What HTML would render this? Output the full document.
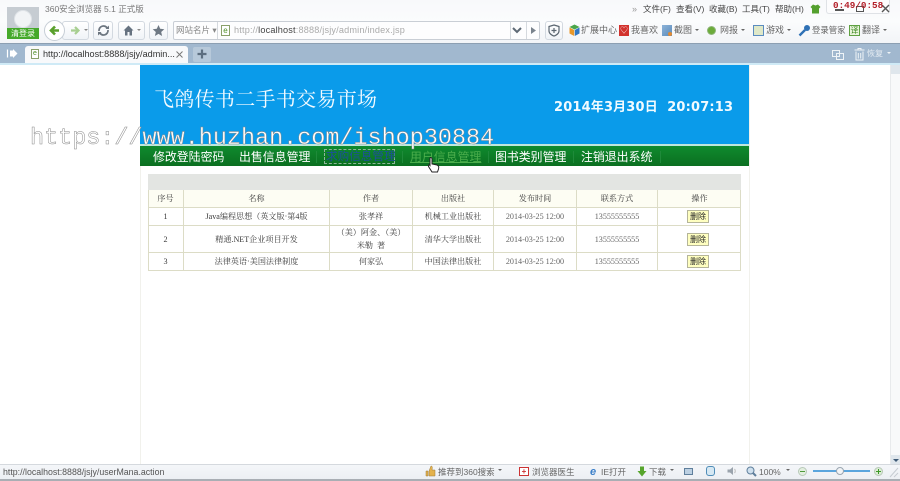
<!DOCTYPE html>
<html><head><meta charset="utf-8">
<style>
html,body{margin:0;padding:0;width:900px;height:481px;overflow:hidden;background:#fff}
body{position:relative;font-family:"Liberation Sans","Noto Sans CJK SC",sans-serif;font-size:9px;color:#666;filter:blur(.3px)}
.a{position:absolute;white-space:nowrap}
.btn{position:absolute;background:linear-gradient(#fff,#f0f3f7);border:1px solid #d3d9e0;border-radius:3px;box-sizing:border-box}
.sv{position:absolute;overflow:visible}
.nav{position:absolute;top:149px;font-size:11.9px;color:#fff;line-height:16px;white-space:nowrap}
.c{position:absolute;text-align:center;font-family:"Liberation Serif","Noto Serif CJK SC",serif;font-size:8.1px;color:#3a3a3a;display:flex;align-items:center;justify-content:center;line-height:13px}
.del{position:absolute;left:687px;width:22px;height:13px;background:#ffffc0;border:1px solid #b5b59a;box-sizing:border-box;font-size:8px;color:#222;text-align:center;line-height:11px}
.st{position:absolute;top:466px;font-size:8.5px;color:#666;white-space:nowrap;line-height:12px}
</style></head><body>

<!-- browser chrome -->
<div class="a" style="left:0;top:0;width:900px;height:43px;background:linear-gradient(#f8f9fb,#fbfcfd 50%,#f2f4f7)"></div>
<div class="a" style="left:0;top:43px;width:900px;height:1px;background:#8c9fb2"></div>
<div class="a" style="left:0;top:44px;width:900px;height:19px;background:#a1b8cf"></div>
<div class="a" style="left:0;top:63px;width:900px;height:2px;background:#cfeaf6"></div>

<!-- avatar -->
<div class="a" style="left:7px;top:7px;width:32px;height:21px;background:#c6ccd2"></div>
<div class="a" style="left:14px;top:10px;width:18px;height:18px;border-radius:50%;background:#f2f4f6;border:1px solid #dfe3e7;box-sizing:border-box"></div>
<div class="a" style="left:7px;top:28px;width:32px;height:11px;background:#45a92a;color:#fff;font-size:8px;line-height:11px;text-align:center">清登录</div>
<div class="a" style="left:45px;top:4px;font-size:8.5px;line-height:11px;color:#777">360安全浏览器 5.1 正式版</div>

<!-- nav buttons -->
<div class="btn" style="left:62px;top:21px;width:27px;height:19px"></div>
<div class="a" style="left:44px;top:20px;width:21px;height:21px;border-radius:50%;background:#fff;border:1px solid #c7ced6;box-sizing:border-box"></div>
<svg class="sv" style="left:48px;top:24px" width="13" height="13"><path d="M11 6.500H4M7 2.500L3 6.500L7 10.500" fill="none" stroke="#5aa02c" stroke-width="2.600"/></svg>
<svg class="sv" style="left:70px;top:25px" width="11" height="11"><path d="M1 5.500H8M5 2L8.500 5.500L5 9" fill="none" stroke="#a8cf91" stroke-width="2.200"/></svg>
<div class="a" style="left:84px;top:29px;border:2px solid transparent;border-top:2px solid #888"></div>
<div class="btn" style="left:93px;top:21px;width:20px;height:19px"></div>
<svg class="sv" style="left:97px;top:24px" width="13" height="13"><path d="M2 7A4.500 4.500 0 0 1 10.500 4.500M11 6A4.500 4.500 0 0 1 2.500 8.500" fill="none" stroke="#6d7680" stroke-width="1.800"/><path d="M8.500 5H12V1.500zM4.500 8H1V11.500z" fill="#6d7680"/></svg>
<div class="btn" style="left:118px;top:21px;width:27px;height:19px"></div>
<svg class="sv" style="left:123px;top:25px" width="11" height="11"><path d="M5.500 0.500L0.500 5.500H2V10.500H4.500V7H6.500V10.500H9V5.500H10.500z" fill="#667280"/></svg>
<div class="a" style="left:137px;top:29px;border:2px solid transparent;border-top:2px solid #888"></div>
<div class="btn" style="left:149px;top:21px;width:19px;height:19px"></div>
<svg class="sv" style="left:152px;top:24px" width="13" height="13"><path d="M6.500 1L8.200 4.800L12.300 5.200L9.200 8L10.100 12L6.500 9.900L2.900 12L3.800 8L0.700 5.200L4.800 4.800z" fill="#6e7883"/></svg>

<!-- address bar -->
<div class="btn" style="left:173px;top:21px;width:367px;height:19px;background:#fdfdfe;border-color:#c9ced5;border-radius:2px"></div>
<div class="a" style="left:176px;top:24px;font-size:8.5px;line-height:12px;color:#888">网站名片 ▾</div>
<div class="a" style="left:217px;top:22px;width:1px;height:17px;background:#d5d9de"></div>
<div class="a" style="left:221px;top:25px;width:9px;height:11px;background:#fff;border:1px solid #8aa06a;box-sizing:border-box;color:#4d8f25;font-size:8px;line-height:9px;text-align:center">e</div>
<div class="a" style="left:234px;top:24px;font-size:9.150px;line-height:13px;color:#aaa;letter-spacing:.02em">http://<b style="color:#444;font-weight:normal">localhost</b>:8888/jsjy/admin/index.jsp</div>
<div class="a" style="left:510px;top:22px;width:15px;height:17px;border-left:1px solid #d5d9de;border-right:1px solid #d5d9de"></div>
<svg class="sv" style="left:512px;top:27px" width="10" height="7"><path d="M1 1L5 5L9 1" fill="none" stroke="#5e6975" stroke-width="2"/></svg>
<svg class="sv" style="left:530px;top:26px" width="7" height="9"><path d="M1 1L6 4.500L1 8z" fill="#7a838d"/></svg>
<div class="btn" style="left:545px;top:21px;width:18px;height:19px"></div>
<svg class="sv" style="left:548px;top:24px" width="12" height="13"><path d="M6 1L11 2.500V7C11 9.500 8 11.500 6 12C4 11.500 1 9.500 1 7V2.500z" fill="none" stroke="#5b6670" stroke-width="1.200"/><path d="M6 4V9M3.500 6.500H8.500" stroke="#5b6670" stroke-width="1.200"/></svg>

<!-- toolbar right -->
<svg class="sv" style="left:569px;top:24px" width="11" height="13"><path d="M5.500 0.500L10.500 3L5.500 5.500L0.500 3z" fill="#4aa64a"/><path d="M0.500 3.500L5.200 6V12L0.500 9.500z" fill="#e9982a"/><path d="M10.500 3.500L5.800 6V12L10.500 9.500z" fill="#3078c5"/></svg>
<div class="a" style="left:581px;top:25px;line-height:11px">扩展中心</div>
<div class="a" style="left:619px;top:25px;width:10px;height:11px;background:#d2322d;color:#fff;font-size:8px;line-height:11px;text-align:center">♡</div>
<div class="a" style="left:631px;top:25px;line-height:11px">我喜欢</div>
<div class="a" style="left:662px;top:25px;width:10px;height:11px;background:linear-gradient(135deg,#8db3d9,#5b8cbb)"></div>
<div class="a" style="left:668px;top:32px;width:4px;height:4px;background:#e08a34;border-radius:50%"></div>
<div class="a" style="left:674px;top:25px;line-height:11px">截图</div>
<div class="a" style="left:695px;top:29px;border:2px solid transparent;border-top:2px solid #666"></div>
<div class="a" style="left:707px;top:26px;width:9px;height:9px;border-radius:50%;background:#6cab3a;border:1px solid #8fb67a;box-sizing:border-box"></div>
<div class="a" style="left:720px;top:25px;line-height:11px">网报</div>
<div class="a" style="left:741px;top:29px;border:2px solid transparent;border-top:2px solid #666"></div>
<div class="a" style="left:753px;top:25px;width:11px;height:11px;background:#dfe8c8;border:1px solid #5a8cc0;box-sizing:border-box"></div>
<div class="a" style="left:766px;top:25px;line-height:11px">游戏</div>
<div class="a" style="left:787px;top:29px;border:2px solid transparent;border-top:2px solid #666"></div>
<svg class="sv" style="left:798px;top:24px" width="13" height="13"><circle cx="9" cy="4" r="3" fill="#2f71b5"/><path d="M7 6L1.500 11.500" stroke="#2f71b5" stroke-width="2.400"/></svg>
<div class="a" style="left:812px;top:25px;line-height:11px;font-size:8.4px">登录管家</div>
<div class="a" style="left:849px;top:25px;width:11px;height:11px;background:#e9f4dc;border:1px solid #5fa142;box-sizing:border-box;color:#3d8a22;font-size:8px;line-height:9px;text-align:center">译</div>
<div class="a" style="left:862px;top:25px;line-height:11px">翻译</div>
<div class="a" style="left:883px;top:29px;border:2px solid transparent;border-top:2px solid #666"></div>

<!-- menu row -->
<div class="a" style="left:632px;top:4px;font-size:9px;color:#999;line-height:11px">»</div>
<div class="a" style="left:643px;top:4px;font-size:8.5px;line-height:11px;color:#444">文件(F)</div>
<div class="a" style="left:676px;top:4px;font-size:8.5px;line-height:11px;color:#444">查看(V)</div>
<div class="a" style="left:709px;top:4px;font-size:8.5px;line-height:11px;color:#444">收藏(B)</div>
<div class="a" style="left:742px;top:4px;font-size:8.5px;line-height:11px;color:#444">工具(T)</div>
<div class="a" style="left:775px;top:4px;font-size:8.5px;line-height:11px;color:#444">帮助(H)</div>
<svg class="sv" style="left:810px;top:4px" width="11" height="10"><path d="M3 0.500L5.500 1.500L8 0.500L10.500 3L9 4.500V9.500H2V4.500L0.500 3z" fill="#54a02e"/></svg>
<div class="a" style="left:826px;top:0;width:64px;height:14px;background:#fcfcfd;border:1px solid #dfe2e6;border-top:0;border-radius:0 0 3px 3px;box-sizing:border-box"></div>
<div class="a" style="left:835px;top:9px;width:9px;height:2px;background:#555"></div>
<div class="a" style="left:856px;top:6px;width:8px;height:6px;border:1px solid #555;box-sizing:border-box"></div>
<svg class="sv" style="left:881px;top:4px" width="9" height="9"><path d="M1 1L8 8M8 1L1 8" stroke="#555" stroke-width="1.400"/></svg>
<div class="a" style="left:833px;top:0;font-family:'Liberation Mono',monospace;font-weight:bold;font-size:9.300px;line-height:11px;color:#b3202a">0:49/0:58</div>

<!-- tab row -->
<svg class="sv" style="left:7px;top:49px" width="11" height="9"><path d="M0.500 0.500V8.500" stroke="#fff" stroke-width="1.200"/><path d="M3 1.500H6V0L10.500 4.500L6 9V7.500H3z" fill="#fff"/></svg>
<div class="a" style="left:25px;top:46px;width:163px;height:17px;background:#f8f9fb;border-radius:3px 3px 0 0"></div>
<div class="a" style="left:31px;top:49px;width:8px;height:10px;background:#fff;border:1px solid #8aa06a;box-sizing:border-box;color:#4d8f25;font-size:7px;line-height:8px;text-align:center">e</div>
<div class="a" style="left:43px;top:48px;font-size:9.100px;line-height:13px;color:#333">http://localhost:8888/jsjy/admin...</div>
<svg class="sv" style="left:176px;top:51px" width="7" height="7"><path d="M0.500 0.500L6.500 6.500M6.500 0.500L0.500 6.500" stroke="#777" stroke-width="1"/></svg>
<div class="a" style="left:193px;top:47px;width:18px;height:15px;background:#b7c9da;border-radius:2px"></div>
<svg class="sv" style="left:197px;top:49px" width="10" height="10"><path d="M5 0.500V9.500M0.500 5H9.500" stroke="#5c6e80" stroke-width="2.200"/></svg>
<div class="a" style="left:832px;top:50px;width:8px;height:7px;border:1px solid #eef3f7;box-sizing:border-box"></div>
<div class="a" style="left:836px;top:53px;width:8px;height:7px;border:1px solid #eef3f7;box-sizing:border-box"></div>
<svg class="sv" style="left:854px;top:48px" width="11" height="13"><path d="M0.500 2H10.500M4 2V0.500H7V2M2 3.500V12H9V3.500M4.300 5V10.500M6.700 5V10.500" fill="none" stroke="#eef3f7" stroke-width="1"/></svg>
<div class="a" style="left:867px;top:48px;font-size:8px;line-height:11px;color:#e6edf3">恢复</div>
<div class="a" style="left:887px;top:52px;border:2px solid transparent;border-top:2px solid #eef3f7"></div>

<!-- page -->
<div class="a" style="left:140px;top:65px;width:1px;height:399px;background:#f1f1ec"></div>
<div class="a" style="left:749px;top:65px;width:1px;height:399px;background:#f1f1ec"></div>
<div class="a" style="left:140px;top:65px;width:609px;height:80px;background:#0a9bea"></div>
<div class="a" style="left:140px;top:144px;width:609px;height:2px;background:#bfe6dc"></div>
<div class="a" style="left:140px;top:146px;width:609px;height:20px;background:linear-gradient(#0f8a2e,#0b6f20)"></div>
<div class="a" style="left:154px;top:89px;font-size:20px;line-height:23px;color:#f4fbff;font-family:'Liberation Serif','Noto Serif CJK SC',serif;letter-spacing:.3px">飞鸽传书二手书交易市场</div>
<div class="a" style="left:554px;top:99px;font-size:12.950px;line-height:17px;font-weight:bold;color:#f2fbff;font-family:'DejaVu Sans','Noto Sans CJK SC',sans-serif;letter-spacing:.2px">2014年3月30日&nbsp;&nbsp;20:07:13</div>

<div class="nav" style="left:153px">修改登陆密码</div>
<div class="nav" style="left:239px">出售信息管理</div>
<div class="a" style="left:324px;top:149px;width:71px;height:15px;border:1px dashed #8fb59a;box-sizing:border-box"></div>
<div class="nav" style="left:326px;color:#1d4f9c;font-size:11.600px">求购信息管理</div>
<div class="nav" style="left:410px;color:#4cae4c;text-decoration:underline">用户信息管理</div>
<div class="nav" style="left:495px">图书类别管理</div>
<div class="nav" style="left:581px">注销退出系统</div>
<div class="a" style="left:316px;top:151px;width:1px;height:12px;background:#1f8a3a"></div>
<div class="a" style="left:402px;top:151px;width:1px;height:12px;background:#1f8a3a"></div>
<div class="a" style="left:488px;top:151px;width:1px;height:12px;background:#1f8a3a"></div>
<div class="a" style="left:573px;top:151px;width:1px;height:12px;background:#1f8a3a"></div>
<div class="a" style="left:660px;top:151px;width:1px;height:12px;background:#1f8a3a"></div>

<!-- table -->
<div class="a" style="left:148px;top:174px;width:593px;height:16px;background:#e3e5e2"></div>
<div class="a" style="left:148px;top:190px;width:593px;height:17px;background:#fdfdf3"></div>
<div class="a" style="left:148px;top:190px;width:593px;height:81px;border:1px solid #dcdcc6;border-top:0;box-sizing:border-box"></div>
<div class="a" style="left:148px;top:207px;width:593px;height:1px;background:#dcdcc6"></div>
<div class="a" style="left:148px;top:225px;width:593px;height:1px;background:#dcdcc6"></div>
<div class="a" style="left:148px;top:252px;width:593px;height:1px;background:#dcdcc6"></div>
<div class="a" style="left:183px;top:190px;width:1px;height:81px;background:#dcdcc6"></div>
<div class="a" style="left:329px;top:190px;width:1px;height:81px;background:#dcdcc6"></div>
<div class="a" style="left:412px;top:190px;width:1px;height:81px;background:#dcdcc6"></div>
<div class="a" style="left:493px;top:190px;width:1px;height:81px;background:#dcdcc6"></div>
<div class="a" style="left:576px;top:190px;width:1px;height:81px;background:#dcdcc6"></div>
<div class="a" style="left:657px;top:190px;width:1px;height:81px;background:#dcdcc6"></div>

<div class="c" style="left:148px;top:190px;width:35px;height:17px">序号</div>
<div class="c" style="left:184px;top:190px;width:145px;height:17px">名称</div>
<div class="c" style="left:330px;top:190px;width:82px;height:17px">作者</div>
<div class="c" style="left:413px;top:190px;width:80px;height:17px">出版社</div>
<div class="c" style="left:494px;top:190px;width:82px;height:17px">发布时间</div>
<div class="c" style="left:577px;top:190px;width:80px;height:17px">联系方式</div>
<div class="c" style="left:658px;top:190px;width:83px;height:17px">操作</div>

<div class="c" style="left:148px;top:208px;width:35px;height:17px">1</div>
<div class="c" style="left:184px;top:208px;width:145px;height:17px">Java编程思想（英文版·第4版</div>
<div class="c" style="left:330px;top:208px;width:82px;height:17px">张孝祥</div>
<div class="c" style="left:413px;top:208px;width:80px;height:17px">机械工业出版社</div>
<div class="c" style="left:494px;top:208px;width:82px;height:17px;color:#666">2014-03-25 12:00</div>
<div class="c" style="left:577px;top:208px;width:80px;height:17px;color:#666">13555555555</div>
<div class="del" style="top:210px">删除</div>

<div class="c" style="left:148px;top:226px;width:35px;height:26px">2</div>
<div class="c" style="left:184px;top:226px;width:145px;height:26px">精通.NET企业项目开发</div>
<div class="c" style="left:330px;top:226px;width:82px;height:26px">（美）阿金、（美）<br>米勒&nbsp;&nbsp;著</div>
<div class="c" style="left:413px;top:226px;width:80px;height:26px">清华大学出版社</div>
<div class="c" style="left:494px;top:226px;width:82px;height:26px;color:#666">2014-03-25 12:00</div>
<div class="c" style="left:577px;top:226px;width:80px;height:26px;color:#666">13555555555</div>
<div class="del" style="top:233px">删除</div>

<div class="c" style="left:148px;top:253px;width:35px;height:17px">3</div>
<div class="c" style="left:184px;top:253px;width:145px;height:17px">法律英语·美国法律制度</div>
<div class="c" style="left:330px;top:253px;width:82px;height:17px">何家弘</div>
<div class="c" style="left:413px;top:253px;width:80px;height:17px">中国法律出版社</div>
<div class="c" style="left:494px;top:253px;width:82px;height:17px;color:#666">2014-03-25 12:00</div>
<div class="c" style="left:577px;top:253px;width:80px;height:17px;color:#666">13555555555</div>
<div class="del" style="top:255px">删除</div>

<!-- watermark -->
<div class="a" style="left:30px;top:124px;font-family:'Liberation Mono',monospace;font-size:23.450px;line-height:30px;color:#fff;-webkit-text-stroke:.5px #8a8a8a">https://www.huzhan.com/ishop30884</div>

<!-- cursor -->
<svg class="sv" style="left:427px;top:157px" width="13" height="16"><path d="M3 1C4 0 5 1 5 2V7L10 8C12 9 12 10 11.500 12L10.500 15H5L1.500 9.500C1 8 2 7.500 3 8.500z" fill="#fff" stroke="#222" stroke-width="1"/></svg>

<!-- scrollbar -->
<div class="a" style="left:890px;top:65px;width:10px;height:399px;background:#f8f9fa;border-left:1px solid #e8eaec;box-sizing:border-box"></div>
<div class="a" style="left:891px;top:65px;width:9px;height:9px;background:#dfe6ec"></div>
<div class="a" style="left:891px;top:455px;width:9px;height:9px;background:#dfe6ec"></div>
<div class="a" style="left:893px;top:459px;border:3px solid transparent;border-top:3px solid #3f5a76"></div>

<!-- status bar -->
<div class="a" style="left:0;top:464px;width:900px;height:15px;background:linear-gradient(#f4f6f9,#eceff3);border-top:1px solid #d5d9de;box-sizing:border-box"></div>
<div class="a" style="left:0;top:479px;width:900px;height:2px;background:#a9aeb4"></div>
<div class="a" style="left:3px;top:466px;font-size:8.800px;line-height:12px;color:#555">http://localhost:8888/jsjy/userMana.action</div>
<svg class="sv" style="left:425px;top:465px" width="11" height="12"><path d="M1 6H3V11H1zM4 6L6 1C7.500 1 7.500 2.500 7 5H10V11H4z" fill="#e4b24c" stroke="#9c7a3a" stroke-width=".5"/></svg>
<div class="st" style="left:438px">推荐到360搜索</div>
<div class="a" style="left:498px;top:469px;border:2px solid transparent;border-top:2px solid #666"></div>
<div class="a" style="left:519px;top:467px;width:10px;height:9px;background:#fff;border:1px solid #c33;box-sizing:border-box;color:#c33;font-size:8px;line-height:7px;text-align:center;font-weight:bold">+</div>
<div class="st" style="left:532px">浏览器医生</div>
<div class="a" style="left:590px;top:466px;color:#3a7fc9;font-size:11px;line-height:12px;font-style:italic;font-weight:bold">e</div>
<div class="st" style="left:601px">IE打开</div>
<svg class="sv" style="left:637px;top:466px" width="10" height="11"><path d="M3 0.500H7V5H9.500L5 10.500L0.500 5H3z" fill="#57a52d"/></svg>
<div class="st" style="left:649px">下载</div>
<div class="a" style="left:670px;top:469px;border:2px solid transparent;border-top:2px solid #666"></div>
<div class="a" style="left:684px;top:468px;width:9px;height:7px;background:#bcd0e2;border:1px solid #5f7f9c;box-sizing:border-box"></div>
<div class="a" style="left:706px;top:466px;width:9px;height:10px;border:1px solid #4f8db8;border-radius:3px;box-sizing:border-box;background:#d6e8f3"></div>
<svg class="sv" style="left:727px;top:466px" width="11" height="10"><path d="M0.500 3.500H3L6 1V9L3 6.500H0.500z" fill="#9aa3ac"/><path d="M7.500 3C8.500 4 8.500 6 7.500 7" fill="none" stroke="#bbb"/></svg>
<svg class="sv" style="left:746px;top:466px" width="11" height="11"><circle cx="4.500" cy="4.500" r="3.500" fill="#cfe0ee" stroke="#5f7f9c"/><path d="M7 7L10 10" stroke="#5f7f9c" stroke-width="2"/></svg>
<div class="st" style="left:759px">100%</div>
<div class="a" style="left:786px;top:469px;border:2px solid transparent;border-top:2px solid #666"></div>
<div class="a" style="left:798px;top:467px;width:9px;height:9px;border-radius:50%;background:#e3efe0;border:1px solid #b8c9b8;box-sizing:border-box"></div>
<div class="a" style="left:800px;top:471px;width:5px;height:1px;background:#4f9a3a"></div>
<div class="a" style="left:813px;top:470px;width:57px;height:2px;background:#5aa5dd"></div>
<div class="a" style="left:836px;top:467px;width:8px;height:8px;border-radius:50%;background:#f2f4f6;border:1px solid #9aa5b0;box-sizing:border-box"></div>
<div class="a" style="left:874px;top:467px;width:9px;height:9px;border-radius:50%;background:#dcebd6;border:1px solid #b8c9b8;box-sizing:border-box"></div>
<div class="a" style="left:876px;top:471px;width:5px;height:1px;background:#3f9a2a"></div>
<div class="a" style="left:878px;top:469px;width:1px;height:5px;background:#3f9a2a"></div>
<svg class="sv" style="left:889px;top:467px" width="10" height="11"><path d="M1 10L9 1M5 10L9 6" stroke="#c6ccd2" stroke-width="1"/></svg>

</body></html>
